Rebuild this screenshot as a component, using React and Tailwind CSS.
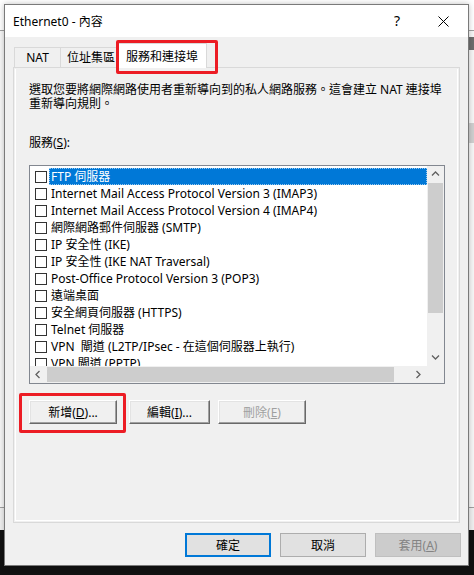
import React from 'react';

const SERVICES = [
  'FTP 伺服器',
  'Internet Mail Access Protocol Version 3 (IMAP3)',
  'Internet Mail Access Protocol Version 4 (IMAP4)',
  '網際網路郵件伺服器 (SMTP)',
  'IP 安全性 (IKE)',
  'IP 安全性 (IKE NAT Traversal)',
  'Post-Office Protocol Version 3 (POP3)',
  '遠端桌面',
  '安全網頁伺服器 (HTTPS)',
  'Telnet 伺服器',
  'VPN  閘道 (L2TP/IPsec - 在這個伺服器上執行)',
  'VPN 閘道 (PPTP)',
];

function Chevron({ dir }) {
  const d = {
    up: 'M1 5.5 L4.5 2 L8 5.5',
    down: 'M1 2.5 L4.5 6 L8 2.5',
    left: 'M5.5 1 L2 4.5 L5.5 8',
    right: 'M2.5 1 L6 4.5 L2.5 8',
  }[dir];
  return (
    <svg width="9" height="9" viewBox="0 0 9 9">
      <path d={d} fill="none" stroke="#606060" strokeWidth="1.3" />
    </svg>
  );
}

function ClassicButton({ children, disabled, className = '' }) {
  return (
    <div
      className={`h-[24px] flex items-center justify-center bg-[#f0f0f0] border border-t-white border-l-white border-r-[#696969] border-b-[#696969] shadow-[inset_-1px_-1px_0_#a0a0a0,inset_1px_1px_0_#e3e3e3] text-[12px] ${disabled ? 'text-[#a0a0a0]' : 'text-black'} ${className}`}
    >
      {children}
    </div>
  );
}

function ServiceRow({ label, selected }) {
  return (
    <div className="flex items-center h-[17px] shrink-0">
      <span className="ml-[5px] w-[12px] h-[12px] border border-[#333333] bg-white shrink-0" />
      <span
        className={`ml-[2px] flex-1 h-full flex items-center pl-[2px] whitespace-pre ${
          selected ? 'bg-[#0078d7] text-white outline outline-1 outline-dotted outline-[#99c9ef] -outline-offset-1' : 'text-black'
        }`}
      >
        {label}
      </span>
    </div>
  );
}

export default function App() {
  return (
    <div className="relative w-[474px] h-[575px] bg-white overflow-hidden font-['Noto_Sans','Noto_Sans_CJK_TC',sans-serif] text-[12px] leading-[13px]">
      {/* desktop behind the dialog */}
      <div className="absolute left-0 right-0 top-[30px] h-px bg-[#a0a0a0]" />
      <div className="absolute left-0 right-0 top-[31px] h-[476px] bg-[#f7f7f7]" />
      <div className="absolute right-0 w-[6px] top-[37px] h-[13px] bg-[#6d6d6d]" />
      <div className="absolute right-0 w-[5px] top-[123px] h-[20px] bg-[#d0d0d0]" />
      <div className="absolute left-0 right-0 top-[507px] h-px bg-[#a0a0a0]" />
      <div className="absolute left-0 right-0 top-[508px] h-[22px] bg-[#f0f0f0]" />
      <div className="absolute left-0 right-0 top-[530px] bottom-0 bg-[#111111]" />

      {/* dialog window */}
      <div className="absolute left-[4px] top-[4px] w-[465px] flex flex-col bg-[#f0f0f0] border border-[#7a7a7a] shadow-[0_0_6px_rgba(0,0,0,0.25)]">
        <div className="h-[32px] bg-white flex items-center pl-[8px] relative">
          <span className="text-[12px] text-black">Ethernet0 - 內容</span>
          <span className="absolute left-[389px] top-[8px] text-[14px] leading-[16px] text-black">?</span>
          <svg className="absolute left-[433px] top-[11px]" width="11" height="11" viewBox="0 0 11 11">
            <path d="M0.5 0.5 L10.5 10.5 M10.5 0.5 L0.5 10.5" stroke="#000" strokeWidth="1" />
          </svg>
        </div>

        <div className="pt-[7px] px-[8px] flex flex-col">
          {/* tabs */}
          <div className="flex items-end h-[23px] pl-[1px]">
            <div className="h-[20px] w-[47px] border border-b-0 border-[#d9d9d9] bg-[#f0f0f0] flex items-center justify-center">
              NAT
            </div>
            <div className="h-[20px] w-[57px] border border-b-0 border-l-0 border-[#d9d9d9] bg-[#f0f0f0] flex items-center pl-[6px]">
              位址集區
            </div>
            <div className="relative z-10 -ml-[1px] -mb-px h-[25px] w-[90px] border border-b-0 border-[#d9d9d9] bg-white flex items-center justify-center">
              服務和連接埠
            </div>
          </div>

          {/* tab page */}
          <div className="h-[456px] border border-[#d9d9d9] p-px">
            <div className="h-full border border-white border-t-0 flex flex-col px-[13px] pt-[14px]">
              <p className="whitespace-nowrap text-black leading-[14px]">
                選取您要將網際網路使用者重新導向到的私人網路服務。這會建立 NAT 連接埠
                <br />
                重新導向規則。
              </p>

              <p className="mt-[25px] text-black">
                服務(<u>S</u>):
              </p>

              {/* listbox */}
              <div className="mt-[16px] w-[416px] h-[219px] border border-[#828790] bg-white flex flex-col">
                <div className="flex h-[200px]">
                  <div className="flex-1 flex flex-col pt-[2px] overflow-hidden">
                    {SERVICES.map((s, i) => (
                      <ServiceRow key={s} label={s} selected={i === 0} />
                    ))}
                  </div>
                  <div className="w-[17px] bg-[#f0f0f0] flex flex-col">
                    <div className="h-[17px] flex items-center justify-center">
                      <Chevron dir="up" />
                    </div>
                    <div className="h-[130px] mx-[1px] bg-[#cdcdcd]" />
                    <div className="flex-1" />
                    <div className="h-[17px] flex items-center justify-center">
                      <Chevron dir="down" />
                    </div>
                  </div>
                </div>
                <div className="flex h-[17px] bg-[#f0f0f0]">
                  <div className="w-[17px] flex items-center justify-center">
                    <Chevron dir="left" />
                  </div>
                  <div className="w-[347px] my-[1px] bg-[#cdcdcd]" />
                  <div className="flex-1" />
                  <div className="w-[17px] flex items-center justify-center">
                    <Chevron dir="right" />
                  </div>
                  <div className="w-[17px]" />
                </div>
              </div>

              {/* action buttons */}
              <div className="mt-[16px] flex items-center">
                <div className="relative">
                  <ClassicButton className="w-[88px]">
                    新增(<u>D</u>)...
                  </ClassicButton>
                  <div className="absolute -left-[10px] -top-[7px] w-[107px] h-[40px] border-[3px] border-[#ec1c24] rounded-[2px]" />
                </div>
                <ClassicButton className="ml-[12px] w-[81px]">
                  編輯(<u>I</u>)...
                </ClassicButton>
                <ClassicButton className="ml-[8px] w-[88px]" disabled>
                  刪除(<u>E</u>)
                </ClassicButton>
              </div>
            </div>
          </div>

          {/* dialog buttons */}
          <div className="mt-[10px] mb-[8px] flex justify-end gap-[9px]">
            <div className="w-[86px] h-[24px] border-2 border-[#0078d7] bg-[#e1e1e1] flex items-center justify-center text-black">
              確定
            </div>
            <div className="w-[86px] h-[24px] border border-[#adadad] bg-[#e1e1e1] flex items-center justify-center text-black">
              取消
            </div>
            <div className="w-[86px] h-[24px] border border-[#bfbfbf] bg-[#cccccc] flex items-center justify-center text-[#838383] -mr-[1px]">
              套用(<u>A</u>)
            </div>
          </div>
        </div>
      </div>

      {/* highlight around the selected tab */}
      <div className="absolute left-[116px] top-[40px] w-[102px] h-[34px] border-[3px] border-[#ec1c24] rounded-[2px] z-20" />
    </div>
  );
}
